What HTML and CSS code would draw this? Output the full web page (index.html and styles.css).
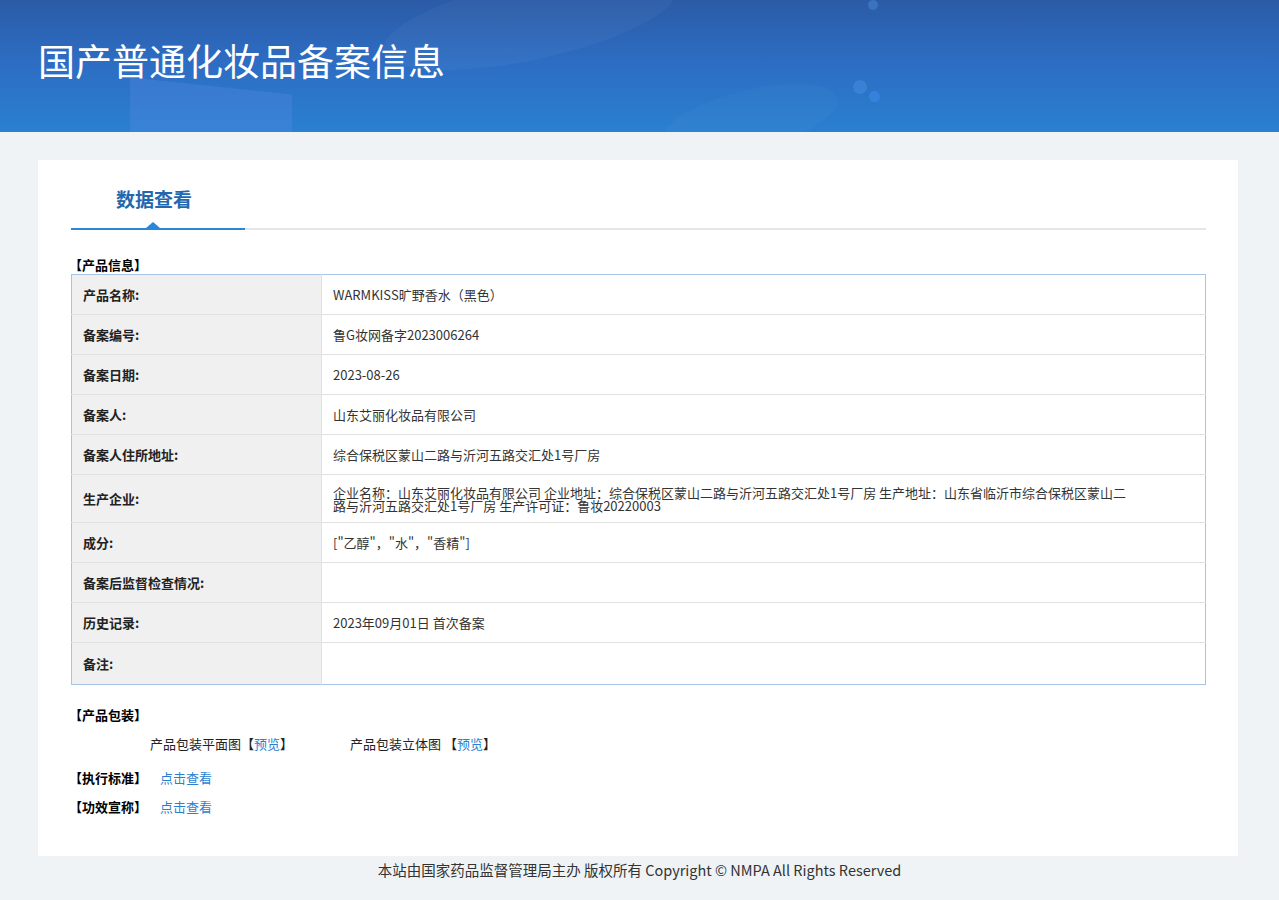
FILE: index.html
```html
<!DOCTYPE html>
<html lang="zh-CN">
<head>
<meta charset="utf-8">
<title>国产普通化妆品备案信息</title>
<link rel="stylesheet" href="styles.css">
</head>
<body>
<header class="banner">
  <div class="deco deco-slab"></div>
  <div class="deco deco-arc1"></div>
  <div class="deco deco-arc2"></div>
  <div class="deco deco-dot1"></div>
  <div class="deco deco-dot2"></div>
  <div class="deco deco-dot3"></div>
  <h1 class="banner-title">国产普通化妆品备案信息</h1>
</header>

<main class="card">
  <div class="tabs">
    <div class="tab-active">数据查看</div>
  </div>

  <div class="section-title first">【产品信息】</div>
  <table class="info">
    <tr><th>产品名称:</th><td>WARMKISS旷野香水（黑色）</td></tr>
    <tr><th>备案编号:</th><td>鲁G妆网备字2023006264</td></tr>
    <tr><th>备案日期:</th><td>2023-08-26</td></tr>
    <tr><th>备案人:</th><td>山东艾丽化妆品有限公司</td></tr>
    <tr><th>备案人住所地址:</th><td>综合保税区蒙山二路与沂河五路交汇处1号厂房</td></tr>
    <tr class="tall"><th>生产企业:</th><td><div class="multi">企业名称：山东艾丽化妆品有限公司 企业地址：综合保税区蒙山二路与沂河五路交汇处1号厂房 生产地址：山东省临沂市综合保税区蒙山二路与沂河五路交汇处1号厂房 生产许可证：鲁妆20220003</div></td></tr>
    <tr><th>成分:</th><td>["乙醇"，"水"，"香精"]</td></tr>
    <tr><th>备案后监督检查情况:</th><td></td></tr>
    <tr><th>历史记录:</th><td>2023年09月01日 首次备案</td></tr>
    <tr class="last"><th>备注:</th><td></td></tr>
  </table>

  <div class="section-title pack">【产品包装】</div>
  <div class="pack-row">
    <span class="pack-item">产品包装平面图【<a href="#" class="link">预览</a>】</span>
    <span class="pack-item">产品包装立体图 【<a href="#" class="link">预览</a>】</span>
  </div>

  <div class="line-item"><span class="line-title">【执行标准】</span><a href="#" class="link">点击查看</a></div>
  <div class="line-item"><span class="line-title">【功效宣称】</span><a href="#" class="link">点击查看</a></div>
</main>

<footer class="footer">本站由国家药品监督管理局主办 版权所有 Copyright © NMPA All Rights Reserved</footer>
</body>
</html>
```

FILE: styles.css
```css
* { box-sizing: border-box; }
html, body {
  margin: 0;
  padding: 0;
}
body {
  background: #eff3f6;
  font-family: "Noto Sans CJK SC", "Open Sans", "Noto Sans", sans-serif;
  color: #333;
  font-size: 13px;
}

.banner {
  position: relative;
  height: 132px;
  overflow: hidden;
  background: linear-gradient(180deg, #2b5ba6 0%, #2d6cc2 45%, #2a80d0 100%);
  padding: 37px 0 0 38px;
}
.deco { position: absolute; pointer-events: none; }
.deco-slab {
  left: 130px; top: 86px; width: 162px; height: 80px;
  background: rgba(90, 140, 230, 0.3);
  transform: skewY(6deg);
}
.deco-arc1 {
  left: 380px; top: -20px; width: 300px; height: 80px;
  border-radius: 50%;
  background: rgba(255, 255, 255, 0.035);
  transform: rotate(-12deg);
}
.deco-arc2 {
  left: 660px; top: 90px; width: 180px; height: 60px;
  border-radius: 50%;
  background: rgba(255, 255, 255, 0.025);
  transform: rotate(-14deg);
}
.deco-dot1 { left: 868px; top: 0; width: 10px; height: 10px; border-radius: 50%; background: rgba(80, 150, 230, 0.4); }
.deco-dot2 { left: 853px; top: 80px; width: 14px; height: 14px; border-radius: 50%; background: rgba(80, 150, 230, 0.4); }
.deco-dot3 { left: 869px; top: 91px; width: 11px; height: 11px; border-radius: 50%; background: rgba(60, 140, 235, 0.55); }

.banner-title {
  position: relative;
  margin: 0;
  color: #fff;
  font-size: 37px;
  font-weight: 400;
  line-height: 46px;
}

.card {
  width: 1200px;
  margin: 28px 0 0 38px;
  background: #fff;
  padding: 20px 32px 40px 33px;
}

.tabs {
  border-bottom: 2px solid #e6e6e6;
  height: 50px;
  position: relative;
}
.tab-active {
  position: absolute;
  left: 0;
  bottom: -2px;
  width: 174px;
  height: 50px;
  text-align: center;
  padding-top: 5px;
  padding-right: 8px;
  font-size: 19px;
  font-weight: 700;
  color: #2268ae;
  border-bottom: 2px solid #2a87d8;
}
.tab-active::after {
  content: "";
  position: absolute;
  left: 75px;
  bottom: 0;
  border-left: 7px solid transparent;
  border-right: 7px solid transparent;
  border-bottom: 6px solid #2a87d8;
}

.section-title {
  font-weight: 700;
  color: #000;
  font-size: 13px;
  line-height: 18px;
  margin-left: -2px;
}
.section-title.first { margin-top: 26px; }
.section-title.pack { margin-top: 21px; }

.info {
  width: 100%;
  border-collapse: collapse;
  border: 1px solid #a6c4ea;
}
.info th, .info td {
  height: 40px;
  border-top: 1px solid #e1e1e1;
  text-align: left;
  vertical-align: middle;
  font-size: 13px;
  padding: 0 11px;
}
.info tr:first-child th, .info tr:first-child td { border-top: none; }
.info th {
  width: 250px;
  background: #f0f0f0;
  border-right: 1px solid #e1e1e1;
  font-weight: 700;
  color: #222;
}
.info td { color: #333; }
.info tr.tall th, .info tr.tall td { height: 48px; }
.info tr.last th, .info tr.last td { height: 42px; }
.multi {
  max-width: 800px;
  line-height: 13px;
  padding-top: 1px;
}

.pack-row {
  margin-top: 11px;
  padding-left: 79px;
  display: flex;
  color: #222;
  line-height: 18px;
}
.pack-item { width: 200px; }
.link { color: #2a7fd0; text-decoration: none; }

.line-item {
  display: flex;
  line-height: 18px;
  color: #000;
}
.line-title {
  width: 91px;
  margin-left: -2px;
  font-weight: 700;
}
.pack-row + .line-item { margin-top: 16px; }
.line-item + .line-item { margin-top: 11px; }

.footer {
  text-align: center;
  font-size: 14.5px;
  color: #333;
  padding: 4px 0 20px;
  line-height: 20px;
}
```
